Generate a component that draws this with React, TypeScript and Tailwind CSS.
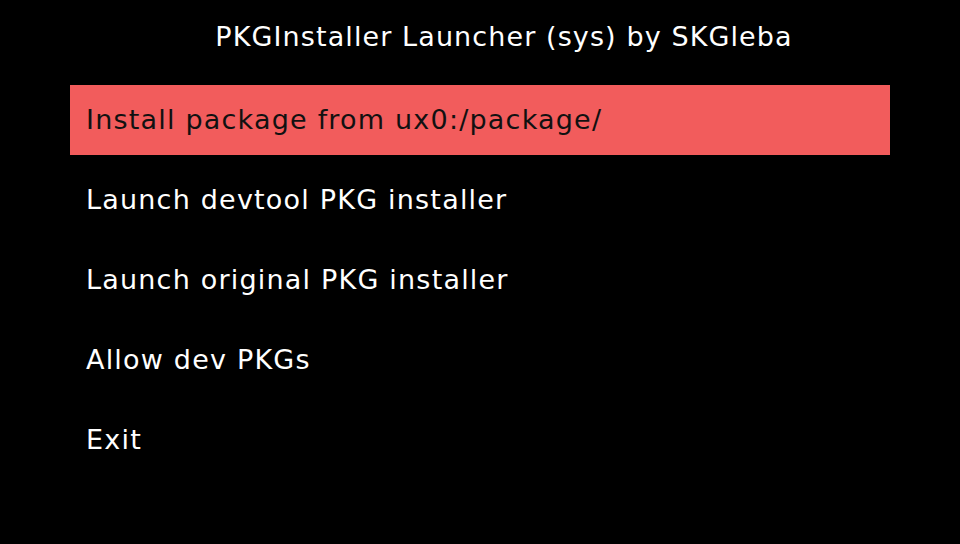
const ITEMS = [
  'Install package from ux0:/package/',
  'Launch devtool PKG installer',
  'Launch original PKG installer',
  'Allow dev PKGs',
  'Exit',
]

export default function App() {
  const selected = 0
  return (
    <div
      className="w-[960px] h-[544px] bg-black text-white overflow-hidden"
      style={{ fontFamily: '"DejaVu Sans", "Liberation Sans", sans-serif' }}
    >
      <div className="h-[75px] flex items-center justify-center pl-[48px] pb-[2px]">
        <h1 className="text-[27px] leading-none tracking-[1.1px]">PKGInstaller Launcher (sys) by SKGleba</h1>
      </div>
      <div className="flex flex-col gap-[10px] px-[70px] pt-[10px]">
        {ITEMS.map((item, i) => (
          <div
            key={item}
            className={`h-[70px] flex items-center px-[16px] text-[27px] tracking-[1.2px] ${
              i === selected ? 'bg-[#f25c5c] text-[#111111]' : 'text-white'
            }`}
          >
            {item}
          </div>
        ))}
      </div>
    </div>
  )
}
